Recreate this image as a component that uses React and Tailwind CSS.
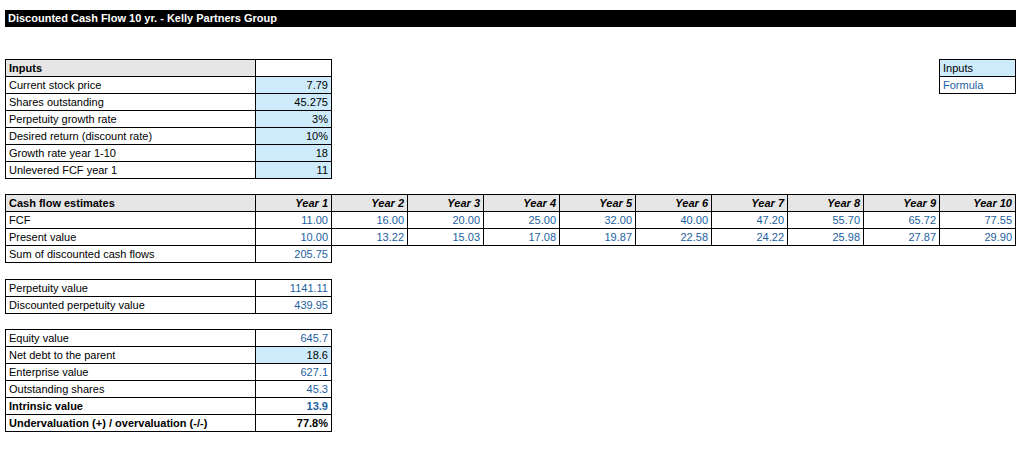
import React from 'react';

const BLUE_TEXT = 'text-[#1c5f9f]';

const Cell = ({ children, className = '' }) => (
  <div
    className={`h-[17px] border-r border-b border-black flex items-center px-[3px] whitespace-nowrap overflow-hidden ${className}`}
  >
    {children}
  </div>
);

const inputs = [
  ['Current stock price', '7.79'],
  ['Shares outstanding', '45.275'],
  ['Perpetuity growth rate', '3%'],
  ['Desired return (discount rate)', '10%'],
  ['Growth rate year 1-10', '18'],
  ['Unlevered FCF year 1', '11'],
];

const fcf = ['11.00', '16.00', '20.00', '25.00', '32.00', '40.00', '47.20', '55.70', '65.72', '77.55'];
const pv = ['10.00', '13.22', '15.03', '17.08', '19.87', '22.58', '24.22', '25.98', '27.87', '29.90'];

const App = () => {
  return (
    <div
      className="pl-[5px] pt-[10px] text-[11px] leading-none text-black bg-white min-h-[453px]"
      style={{ fontFamily: '"Liberation Sans", Arial, sans-serif' }}
    >
      {/* Title */}
      <div className="w-[1011px] h-[17px] bg-black text-white font-bold flex items-center px-[3px]">
        Discounted Cash Flow 10 yr. - Kelly Partners Group
      </div>

      {/* Inputs + legend */}
      <div className="w-[1011px] mt-[32px] flex justify-between items-start">
        <div className="grid grid-cols-[250px_76px] border-l border-t border-black">
          <Cell className="bg-[#e6e6e6] font-bold">Inputs</Cell>
          <Cell />
          {inputs.map(([label, value]) => (
            <React.Fragment key={label}>
              <Cell>{label}</Cell>
              <Cell className="bg-[#cdebfa] justify-end">{value}</Cell>
            </React.Fragment>
          ))}
        </div>

        <div className="grid grid-cols-[76px] border-l border-t border-black">
          <Cell className="bg-[#cdebfa]">Inputs</Cell>
          <Cell className={BLUE_TEXT}>Formula</Cell>
        </div>
      </div>

      {/* Cash flow estimates */}
      <div className="mt-[15px] w-[1011px] grid grid-cols-[250px_repeat(10,76px)] border-l border-t border-black">
        <Cell className="bg-[#e6e6e6] font-bold">Cash flow estimates</Cell>
        {fcf.map((_, i) => (
          <Cell key={`h${i}`} className="bg-[#e6e6e6] font-bold italic justify-end">
            Year {i + 1}
          </Cell>
        ))}
        <Cell>FCF</Cell>
        {fcf.map((v, i) => (
          <Cell key={`f${i}`} className={`justify-end ${BLUE_TEXT}`}>
            {v}
          </Cell>
        ))}
        <Cell>Present value</Cell>
        {pv.map((v, i) => (
          <Cell key={`p${i}`} className={`justify-end ${BLUE_TEXT}`}>
            {v}
          </Cell>
        ))}
        <Cell>Sum of discounted cash flows</Cell>
        <Cell className={`justify-end ${BLUE_TEXT}`}>205.75</Cell>
        <div className="col-span-9" />
      </div>

      {/* Perpetuity */}
      <div className="mt-[16px] w-fit grid grid-cols-[250px_76px] border-l border-t border-black">
        <Cell>Perpetuity value</Cell>
        <Cell className={`justify-end ${BLUE_TEXT}`}>1141.11</Cell>
        <Cell>Discounted perpetuity value</Cell>
        <Cell className={`justify-end ${BLUE_TEXT}`}>439.95</Cell>
      </div>

      {/* Valuation */}
      <div className="mt-[15px] w-fit grid grid-cols-[250px_76px] border-l border-t border-black">
        <Cell>Equity value</Cell>
        <Cell className={`justify-end ${BLUE_TEXT}`}>645.7</Cell>
        <Cell>Net debt to the parent</Cell>
        <Cell className="justify-end bg-[#cdebfa]">18.6</Cell>
        <Cell>Enterprise value</Cell>
        <Cell className={`justify-end ${BLUE_TEXT}`}>627.1</Cell>
        <Cell>Outstanding shares</Cell>
        <Cell className={`justify-end ${BLUE_TEXT}`}>45.3</Cell>
        <Cell className="font-bold">Intrinsic value</Cell>
        <Cell className={`justify-end font-bold ${BLUE_TEXT}`}>13.9</Cell>
        <Cell className="font-bold">Undervaluation (+) / overvaluation (-/-)</Cell>
        <Cell className="justify-end font-bold">77.8%</Cell>
      </div>
    </div>
  );
};

export default App;
